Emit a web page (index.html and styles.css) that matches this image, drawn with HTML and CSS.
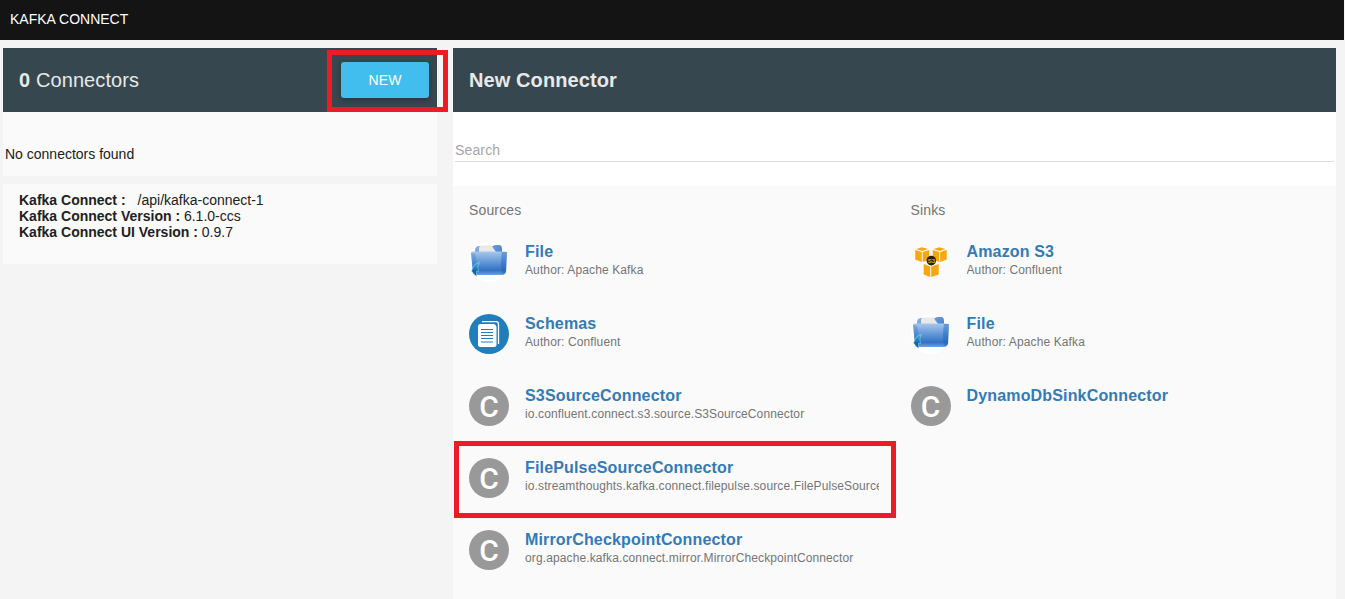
FILE: index.html
```
<!DOCTYPE html>
<html lang="en">
<head>
<meta charset="utf-8">
<title>Kafka Connect</title>
<link rel="stylesheet" href="styles.css">
</head>
<body>
<svg class="defs" aria-hidden="true">
  <defs>
    <linearGradient id="folderFront" x1="0" y1="0" x2="0" y2="1">
      <stop offset="0" stop-color="#a9c7ec"/><stop offset=".5" stop-color="#5b92d6"/><stop offset=".8" stop-color="#3272c2"/><stop offset="1" stop-color="#6ba3e6"/>
    </linearGradient>
    <linearGradient id="folderBack" x1="0" y1="0" x2="1" y2="1">
      <stop offset="0" stop-color="#8db4e8"/><stop offset="1" stop-color="#1f68c4"/>
    </linearGradient>
    <linearGradient id="arrow" x1="0" y1="0" x2="0" y2="1">
      <stop offset="0" stop-color="#48b7e0"/><stop offset=".6" stop-color="#0868a8"/><stop offset="1" stop-color="#00609f"/>
    </linearGradient>
    <symbol id="folder" viewBox="0 0 40 40">
      <circle cx="20" cy="20" r="20" fill="#fff"/>
      <path d="M6 30V8Q6 5 9 4H24Q25 3 28 3H30Q33 3 33 7V30Z" fill="url(#folderBack)"/>
      <path d="M10 11V6Q10 4 12 3.500H22Q24 4 24 6L28 11Z" fill="#e9e9e5"/>
      <path d="M2 11Q2 9.500 4 9.500H36Q38 9.500 38 11L37 30Q36 33 34 33H7Q4 33 4 31Z" fill="url(#folderFront)"/>
      <path d="M33 10H38L37 30Q36 32 33 32Q31 22 33 10Z" fill="#155fb8" opacity=".4"/>
      <path d="M6 12Q9 20 7 31H4L2 11Z" fill="#2f71bf" opacity=".3"/>
      <path d="M10.500 20.500Q7.500 25 9.500 29.500L7.500 29V34.500L2.500 29L4 26Q5.500 21 10.500 20.500Z" fill="url(#arrow)" stroke="#a5d8ef" stroke-width=".5"/>
    </symbol>
    <symbol id="schemas" viewBox="0 0 40 40">
      <circle cx="20" cy="20" r="20" fill="#217ebd"/>
      <path d="M13 7.600H27Q29.500 7.600 29.500 10V30" fill="none" stroke="#fff" stroke-width="1.300"/>
      <path d="M11 10H25Q27 10.500 27.500 13V30.500Q27.500 33 25 33H11.500Q9 33 9 30.500V12.500Q9 10 11 10Z" fill="#fff"/>
      <path d="M12 15.500H24M12 18.500H24M12 21.500H24M12 24.500H24M12 28H24" stroke="#217ebd" stroke-width="1.200"/>
    </symbol>
    <symbol id="s3" viewBox="0 0 40 40">
      <g id="cube" fill="#f7a80d">
        <path d="M5 7L11 5.200L17 7L11.200 9Z"/>
        <path d="M4.200 8L10.700 10V20L4.200 17.500Z"/>
        <path d="M11.700 10L18.200 8V17.500L11.700 20Z"/>
      </g>
      <use href="#cube" x="17.500"/>
      <path d="M12.700 22L19.200 24.500V35L12.700 32.500Z M20.200 24.500L27.700 22V32.500L20.200 35Z" fill="#f7a80d"/>
      <circle cx="20.300" cy="18.600" r="4.800" fill="#2b220e"/>
      <text x="20.300" y="20.900" text-anchor="middle" class="s3-label">S3</text>
    </symbol>
  </defs>
</svg>

<header class="topbar">KAFKA CONNECT</header>
<div class="layout">
  <aside class="sidebar">
    <section class="panel connectors">
      <div class="toolbar">
        <h2 class="heading light"><b>0</b> Connectors</h2>
        <div class="new-wrap"><button class="new-btn">NEW</button><span class="mark mark-new"></span></div>
      </div>
      <p class="empty">No connectors found</p>
    </section>
    <section class="panel info">
      <div><b>Kafka Connect :</b><span class="endpoint">/api/kafka-connect-1</span></div>
      <div><b>Kafka Connect Version :</b> 6.1.0-ccs</div>
      <div><b>Kafka Connect UI Version :</b> 0.9.7</div>
    </section>
  </aside>

  <main class="main">
    <div class="toolbar"><h2 class="heading">New Connector</h2></div>
    <div class="search"><input class="search-input" placeholder="Search"></div>
    <div class="columns">
      <section class="column">
        <div class="subheader">Sources</div>
        <div class="item"><svg class="avatar"><use href="#folder"/></svg><div class="text"><h3>File</h3><p>Author: Apache Kafka</p></div></div>
        <div class="item"><svg class="avatar"><use href="#schemas"/></svg><div class="text"><h3>Schemas</h3><p>Author: Confluent</p></div></div>
        <div class="item"><span class="avatar letter">C</span><div class="text"><h3>S3SourceConnector</h3><p>io.confluent.connect.s3.source.S3SourceConnector</p></div></div>
        <div class="item"><span class="avatar letter">C</span><div class="text"><h3>FilePulseSourceConnector</h3><p>io.streamthoughts.kafka.connect.filepulse.source.FilePulseSourceConnector</p></div><span class="mark mark-item"></span></div>
        <div class="item"><span class="avatar letter">C</span><div class="text"><h3>MirrorCheckpointConnector</h3><p>org.apache.kafka.connect.mirror.MirrorCheckpointConnector</p></div></div>
      </section>
      <section class="column">
        <div class="subheader">Sinks</div>
        <div class="item"><svg class="avatar"><use href="#s3"/></svg><div class="text"><h3>Amazon S3</h3><p>Author: Confluent</p></div></div>
        <div class="item"><svg class="avatar"><use href="#folder"/></svg><div class="text"><h3>File</h3><p>Author: Apache Kafka</p></div></div>
        <div class="item"><span class="avatar letter">C</span><div class="text"><h3>DynamoDbSinkConnector</h3></div></div>
      </section>
    </div>
  </main>
</div>
</body>
</html>
```
FILE: styles.css
```
* { box-sizing: border-box; }
html, body { height: 100%; }
body {
  margin: 0;
  overflow: hidden;
  background: #f4f4f4;
  color: #212121;
  font-family: "Liberation Sans", Arial, sans-serif;
  font-size: 14px;
  line-height: 16px;
}
h2, h3, p { margin: 0; }
.defs { position: absolute; width: 0; height: 0; }
.topbar {
  height: 40px;
  margin-right: 1px;
  padding-left: 10px;
  background: #141414;
  color: #fff;
  line-height: 38px;
}
.layout {
  display: flex;
  gap: 16px;
  height: 559px;
  padding: 8px 9px 0 3px;
}
.sidebar { width: 434px; flex: none; }
.panel { background: #fafafa; }
.toolbar {
  display: flex;
  align-items: center;
  justify-content: space-between;
  height: 64px;
  padding: 0 8px 0 16px;
  background: #37474f;
  color: #e7e9ea;
}
.heading { font-size: 20px; line-height: 24px; letter-spacing: .1px; }
.light { font-weight: 400; }
.new-wrap { position: relative; }
.new-btn {
  display: block;
  width: 88px;
  height: 36px;
  padding: 0;
  border: 0;
  border-radius: 3px;
  background: #41beed;
  color: #fff;
  font: 14px "Liberation Sans", Arial, sans-serif;
  letter-spacing: .14px;
  box-shadow: 0 2px 5px rgba(0, 0, 0, .3);
}
.mark { position: absolute; border: 5px solid #ed1c24; pointer-events: none; }
.mark-new { top: -12px; left: -14px; width: 121px; height: 62px; }
.mark-item { top: -2px; left: 1px; width: 442px; height: 77px; }
.connectors { height: 128px; }
.empty { padding: 34px 2px 0; }
.info { height: 80px; margin-top: 8px; padding: 8px 16px; }
.endpoint { margin-left: 12px; }
.main { flex: 1; min-width: 0; background: #fafafa; }
.search { height: 74px; padding: 26px 2px 0; background: #fff; }
.search-input {
  display: block;
  width: 100%;
  height: 24px;
  padding: 0;
  border: 0;
  border-bottom: 1px solid #dedede;
  background: none;
  outline: 0;
  font: 14px "Liberation Sans", Arial, sans-serif;
  letter-spacing: .14px;
}
.search-input::placeholder { color: #a6a6a6; opacity: 1; }
.columns { display: grid; grid-template-columns: repeat(2, minmax(0, 1fr)); }
.subheader { height: 41px; padding: 16px 16px 0; color: #757575; letter-spacing: .14px; }
.item {
  position: relative;
  display: flex;
  gap: 16px;
  height: 72px;
  padding: 16px 16px 0;
}
.avatar { flex: none; width: 40px; height: 40px; margin-top: -1px; }
.letter {
  border-radius: 50%;
  background: #999;
  color: #fff;
  font-family: Roboto, "Liberation Sans", sans-serif;
  font-size: 30px;
  font-weight: 500;
  line-height: 41px;
  text-align: center;
}
.text { flex: 1; min-width: 0; }
.text h3 { color: #337ab7; font-size: 16px; line-height: 18px; letter-spacing: .16px; }
.text p { overflow: hidden; color: #757575; font-size: 12px; line-height: 18px; letter-spacing: .12px; white-space: nowrap; }
.s3-label { fill: #e9a21a; font: bold 6px "Liberation Sans", Arial, sans-serif; }
```
